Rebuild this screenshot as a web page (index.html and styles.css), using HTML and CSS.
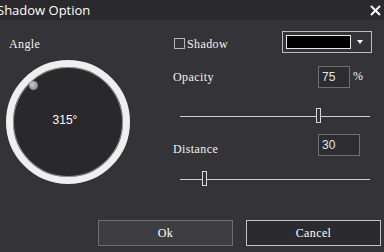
FILE: index.html
```html
<!DOCTYPE html>
<html lang="en">
<head>
    <meta charset="UTF-8">
    <title>Shadow Option</title>
    <link rel="stylesheet" href="styles.css">
</head>
<body>
    <div class="dialog">
        <div class="titlebar">
            <span class="title">Shadow Option</span>
            <svg class="close" width="11" height="11" viewBox="0 0 11 11">
                <path d="M1 1 L10 10 M10 1 L1 10" stroke="#fff" stroke-width="2" />
            </svg>
        </div>

        <div class="main">
            <div class="angle-panel">
                <div class="label">Angle</div>
                <div class="dial">
                    <span class="knob"></span>
                    <span class="dial-value">315°</span>
                </div>
            </div>

            <div class="options">
                <div class="row row-shadow">
                    <span class="check"></span>
                    <span class="label">Shadow</span>
                    <div class="color-picker">
                        <span class="swatch"></span>
                        <span class="arrow"></span>
                    </div>
                </div>

                <div class="row row-opacity">
                    <span class="label field-label">Opacity</span>
                    <div class="num num-short">75</div>
                    <span class="label unit">%</span>
                </div>
                <div class="slider slider-opacity">
                    <span class="track"></span>
                    <span class="thumb" style="left: 136px;"></span>
                </div>

                <div class="row row-distance">
                    <span class="label field-label">Distance</span>
                    <div class="num num-long">30</div>
                </div>
                <div class="slider slider-distance">
                    <span class="track"></span>
                    <span class="thumb" style="left: 22px;"></span>
                </div>
            </div>
        </div>

        <div class="actions">
            <button class="btn btn-ok">Ok</button>
            <button class="btn btn-cancel">Cancel</button>
        </div>
    </div>
</body>
</html>
```

FILE: styles.css
```css
body {
    margin: 0;
    background: #343337;
    font-family: "Liberation Serif", serif;
    overflow: hidden;
}

.dialog {
    width: 384px;
    height: 252px;
    display: flex;
    flex-direction: column;
}

.titlebar {
    height: 20px;
    background: #2a292d;
    display: flex;
    align-items: center;
    justify-content: space-between;
}

.title {
    margin-left: -3px;
    font-family: "Open Sans", "Noto Sans", sans-serif;
    font-size: 13px;
    color: #fff;
}

.close {
    margin-right: 3px;
}

.main {
    height: 200px;
    display: flex;
}

.label {
    font-size: 12px;
    line-height: 12px;
    letter-spacing: 0.4px;
    color: #f2f2f2;
}

/* angle dial */
.angle-panel {
    width: 160px;
}

.angle-panel .label {
    margin: 18px 0 0 9px;
}

.dial {
    position: relative;
    margin: 10px 0 0 6px;
    width: 124px;
    height: 124px;
    box-sizing: border-box;
    border: 7px solid #efefef;
    border-radius: 50%;
    background: #29282b;
    box-shadow: inset 0 0 0 1px #8a898d;
    display: flex;
    align-items: center;
    justify-content: center;
}

.knob {
    position: absolute;
    left: 16px;
    top: 14px;
    width: 9px;
    height: 9px;
    border-radius: 50%;
    background: radial-gradient(circle at 40% 40%, #c9c9c9 0%, #9a9a9a 55%, #6d6d6d 100%);
}

.dial-value {
    margin: -4px 6px 0 0;
    font-family: "Liberation Sans", Arial, sans-serif;
    font-size: 12px;
    color: #fff;
}

/* right side */
.options {
    flex: 1;
    padding-left: 13px;
}

.row {
    height: 22px;
    display: flex;
    align-items: center;
}

.row-shadow {
    margin-top: 11px;
}

.check {
    width: 9px;
    height: 9px;
    margin: 3px 2px 0 1px;
    border: 1px solid #b5b5b5;
}

.row-shadow .label {
    margin-top: 3px;
}

.color-picker {
    margin-left: auto;
    margin-right: 12px;
    width: 90px;
    height: 22px;
    box-sizing: border-box;
    border: 1px solid #bdbdbd;
    display: flex;
    align-items: center;
    padding-left: 3px;
}

.swatch {
    width: 65px;
    height: 14px;
    box-sizing: border-box;
    border: 1px solid #e6e6e6;
    background: #000;
}

.arrow {
    margin-left: 6px;
    width: 0;
    height: 0;
    border-left: 3px solid transparent;
    border-right: 3px solid transparent;
    border-top: 4px solid #fff;
}

.row-opacity {
    margin-top: 13px;
}

.row-distance {
    margin-top: 10px;
}

.row-distance .field-label {
    margin-top: 7px;
}

.field-label {
    width: 145px;
}

.num {
    height: 22px;
    box-sizing: border-box;
    border: 1px solid #6f6e72;
    background: #2d2c30;
    padding: 3px 0 0 3px;
    font-family: "Liberation Sans", Arial, sans-serif;
    font-size: 12px;
    color: #e6e6e6;
}

.num-short {
    width: 32px;
}

.num-long {
    width: 42px;
}

.unit {
    margin: -3px 0 0 3px;
}

/* sliders */
.slider {
    position: relative;
    margin-left: 7px;
    width: 190px;
    height: 16px;
}

.slider-opacity {
    margin-top: 20px;
}

.slider-distance {
    margin-top: 15px;
}

.track {
    position: absolute;
    left: 0;
    right: 0;
    top: 8px;
    height: 1px;
    background: #cfcfcf;
}

.thumb {
    position: absolute;
    top: 0;
    width: 5px;
    height: 15px;
    box-sizing: border-box;
    border: 1px solid #d8d8d8;
    background: #343337;
}

/* buttons */
.actions {
    display: flex;
    gap: 13px;
    padding-left: 98px;
}

.btn {
    width: 135px;
    height: 26px;
    font-family: "Liberation Serif", serif;
    font-size: 12px;
    letter-spacing: 0.4px;
    color: #fff;
}

.btn-ok {
    background: #3e3d42;
    border: 1px solid #6f6e73;
}

.btn-cancel {
    background: #2b2a2e;
    border: 1px solid #c4c4c4;
}
```
